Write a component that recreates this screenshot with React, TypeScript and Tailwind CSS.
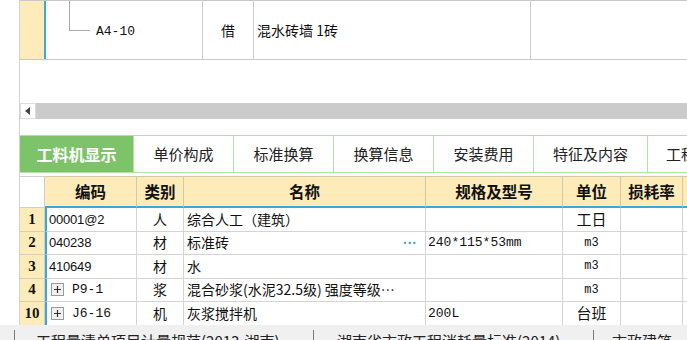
import React from 'react';

const cjk = "font-['Noto_Sans_CJK_SC',sans-serif]";
const mono = "font-['Liberation_Mono','Noto_Sans_CJK_SC',monospace]";
const cols = 'grid grid-cols-[25px_92px_47px_242px_137px_58px_62px_60px]';

type Row = {
  n: string;
  code: string;
  plus?: boolean;
  type: string;
  name: string;
  dots?: boolean;
  spec?: string;
  unit: string;
};

const rows: Row[] = [
  { n: '1', code: '00001@2', type: '人', name: '综合人工（建筑）', unit: '工日' },
  { n: '2', code: '040238', type: '材', name: '标准砖', dots: true, spec: '240*115*53mm', unit: 'm3' },
  { n: '3', code: '410649', type: '材', name: '水', unit: 'm3' },
  { n: '4', code: 'P9-1', plus: true, type: '浆', name: '混合砂浆(水泥32.5级) 强度等级…', unit: 'm3' },
  { n: '10', code: 'J6-16', plus: true, type: '机', name: '灰浆搅拌机', spec: '200L', unit: '台班' },
];

const tabs = ['单价构成', '标准换算', '换算信息', '安装费用', '特征及内容', '工程量明细'];
const tabWidths = ['w-[100px]', 'w-[100px]', 'w-[100px]', 'w-[100px]', 'w-[114px]', 'w-[100px]'];

function PlusBox() {
  return (
    <span className="w-[13px] h-[13px] border border-[#9a9a9a] bg-[#f2f2f2] flex items-center justify-center shrink-0">
      <svg width="9" height="9" viewBox="0 0 9 9">
        <path d="M1 4.5h7M4.5 1v7" stroke="#333" strokeWidth="1.2" />
      </svg>
    </span>
  );
}

export default function App() {
  return (
    <div className={`w-[687px] h-[340px] overflow-hidden bg-white flex flex-col text-[#111] ${cjk}`}>
      <div className="flex-1 min-h-0 ml-[19px] border-l border-[#d2d2d2] flex flex-col overflow-hidden">
        {/* upper grid row */}
        <div className="h-[60px] shrink-0 flex border-t border-b border-[#c9c9c9]">
          <div className="w-[24px] bg-[#fdebb9] border-r-2 border-[#3aa8d8] box-content" />
          <div className="w-[157px] flex items-start border-r border-[#cdcdcd]">
            <div className="ml-[23px] w-[21px] h-[30px] border-l border-b border-[#a9a9a9]" />
            <span className={`ml-[6px] mt-[22px] text-[13px] leading-[18px] ${mono}`}>A4-10</span>
          </div>
          <div className="w-[51px] border-r border-[#cdcdcd] flex items-center justify-center text-[14px]">借</div>
          <div className="w-[277px] border-r border-[#cdcdcd] flex items-center pl-[3px] text-[14px]">混水砖墙 1砖</div>
          <div className="flex-1" />
        </div>

        <div className="h-[43px] shrink-0" />

        {/* horizontal scrollbar */}
        <div className="h-[16px] shrink-0 flex bg-[#cbcbcb]">
          <div className="w-[16px] bg-white border border-[#dcdcdc] flex items-center justify-center">
            <svg width="6" height="8" viewBox="0 0 6 8">
              <path d="M5 0v8L0 4z" fill="#444" />
            </svg>
          </div>
        </div>

        <div className="h-[16px] shrink-0" />

        {/* tabs */}
        <div className="h-[38px] shrink-0 flex border-t border-b border-[#b3e0a6]">
          <div className="w-[113px] shrink-0 bg-[#7cc36a] text-white font-bold text-[16px] flex items-center justify-center">
            工料机显示
          </div>
          {tabs.map((t, i) => (
            <div
              key={t}
              className={`${tabWidths[i]} shrink-0 border-l border-[#b3e0a6] flex items-center text-[15px] text-[#222] ${
                i === 5 ? 'justify-start pl-[18px]' : 'justify-center'
              }`}
            >
              {t}
            </div>
          ))}
        </div>

        <div className="h-[3px] shrink-0" />

        {/* header */}
        <div className={`${cols} h-[32px] shrink-0 text-[15.5px] font-bold`}>
          <div className="bg-white border-r border-b border-t border-[#cfcfcf]" />
          {['编码', '类别', '名称', '规格及型号', '单位', '损耗率', ''].map((h, i) => (
            <div
              key={i}
              className="bg-[#fdebb9] border-r border-t border-[#d2c9a8] border-b-2 border-b-[#3aa8d8] flex items-center justify-center leading-none"
            >
              {h}
            </div>
          ))}
        </div>

        {/* body rows */}
        {rows.map((r) => (
          <div key={r.n} className={`${cols} h-[23.5px] shrink-0 text-[14px]`}>
            <div className="bg-[#fdebb9] border-r border-b border-[#d6d0bb] flex items-center justify-center font-bold text-[15px] font-['Liberation_Serif',serif] leading-none">
              {r.n}
            </div>
            <div className="border-l-2 border-l-[#3aa8d8] border-r border-b border-[#d4d4d4] flex items-center pl-[2px] gap-[8px]">
              {r.plus ? (
                <>
                  <span className="ml-[2px]">
                    <PlusBox />
                  </span>
                  <span className={`text-[13px] ${mono}`}>{r.code}</span>
                </>
              ) : (
                <span className="text-[13px] font-['Liberation_Sans',sans-serif] tracking-[-0.2px]">{r.code}</span>
              )}
            </div>
            <div className="border-r border-b border-[#d4d4d4] flex items-center justify-center">{r.type}</div>
            <div className="border-r border-b border-[#d4d4d4] flex items-center justify-between pl-[3px] pr-[8px] whitespace-nowrap overflow-hidden">
              <span>{r.name}</span>
              {r.dots && (
                <span className="text-[#4f97d6] text-[14px] font-bold leading-none font-['Liberation_Sans',sans-serif]">
                  ···
                </span>
              )}
            </div>
            <div className={`border-r border-b border-[#d4d4d4] flex items-center pl-[2px] text-[13px] ${mono}`}>
              {r.spec}
            </div>
            <div
              className={`border-r border-b border-[#d4d4d4] flex items-center justify-center ${
                r.unit === 'm3' ? `text-[12px] ${mono}` : 'text-[15px]'
              }`}
            >
              {r.unit}
            </div>
            <div className="border-r border-b border-[#d4d4d4]" />
            <div className="border-r border-b border-[#d4d4d4]" />
          </div>
        ))}
      </div>

      {/* status bar */}
      <div className="h-[15px] shrink-0 bg-[#f0f0f0] flex items-start overflow-hidden text-[15px] text-[#222] whitespace-nowrap">
        <div className="w-[14px] shrink-0" />
        <div className="w-px h-[12px] mt-[5px] bg-[#7a7a7a] shrink-0" />
        <div className="w-[298px] shrink-0 pl-[21px] pt-[7px] leading-[18px]">工程量清单项目计量规范(2013-湖南)</div>
        <div className="w-px h-[12px] mt-[5px] bg-[#7a7a7a] shrink-0" />
        <div className="w-[279px] shrink-0 pl-[23px] pt-[7px] leading-[18px]">湖南省市政工程消耗量标准(2014)</div>
        <div className="w-px h-[12px] mt-[5px] bg-[#7a7a7a] shrink-0" />
        <div className="pl-[18px] pt-[7px] leading-[18px]">市政建筑</div>
      </div>
    </div>
  );
}
